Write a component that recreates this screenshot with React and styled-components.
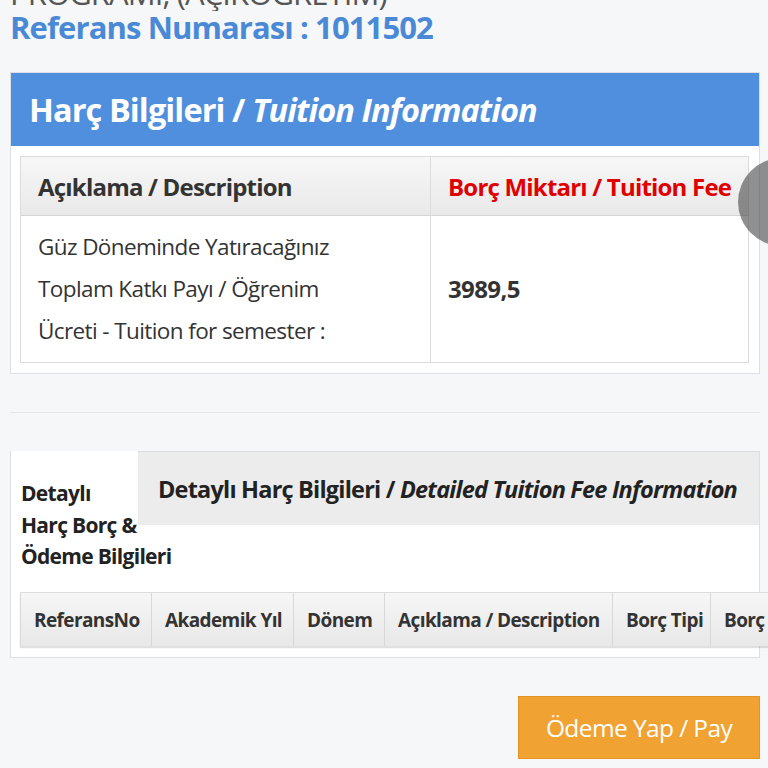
import React from "react";
import styled, { createGlobalStyle } from "styled-components";

const Global = createGlobalStyle`
  html, body { margin: 0; padding: 0; overflow: hidden; }
  body {
    background: #f6f7f9;
    font-family: "Open Sans", "Noto Sans", sans-serif;
    color: #333;
  }
`;

const Page = styled.div`
  position: relative;
  width: 768px;
  height: 768px;
  overflow: hidden;
  padding: 0 8px 0 10px;
  box-sizing: border-box;
`;

const TopClip = styled.div`
  height: 11px;
  overflow: hidden;
`;

const TopLine = styled.div`
  font-size: 31px;
  line-height: 30px;
  color: #555;
  margin-top: -22px;
  white-space: nowrap;
  letter-spacing: -0.9px;
`;

const RefLine = styled.div`
  font-size: 31px;
  line-height: 32px;
  font-weight: 700;
  color: #4a89d6;
  letter-spacing: -0.9px;
`;

const Panel = styled.section`
  margin-top: ${(p) => p.$mt || 0}px;
  background: #fff;
  border: 1px solid #dcdfe3;
`;

const PanelHeader = styled.h2`
  margin: 0;
  background: #4f8fdd;
  color: #fff;
  font-size: 32.5px;
  font-weight: 700;
  height: 73px;
  display: flex;
  align-items: center;
  padding-left: 18px;
  letter-spacing: -0.9px;
  em { font-style: italic; }
`;

const PanelBody = styled.div`
  padding: 10px 10px 10px 9px;
`;

const FeeTable = styled.div`
  display: grid;
  grid-template-columns: 409px 1fr;
  border: 1px solid #dcdcdc;
`;

const HeadCell = styled.div`
  height: 58px;
  display: flex;
  align-items: center;
  padding-left: 17px;
  font-size: 24px;
  font-weight: 700;
  color: ${(p) => (p.$red ? "#e00000" : "#333")};
  background: linear-gradient(#f7f7f7, #e9e9e9);
  border-bottom: 1px solid #d4d4d4;
  border-left: ${(p) => (p.$first ? "none" : "1px solid #dcdcdc")};
  white-space: nowrap;
  letter-spacing: -0.8px;
`;

const BodyCell = styled.div`
  padding: 10px 60px 10px 17px;
  line-height: 42px;
  font-weight: ${(p) => (p.$bold ? 700 : 400)};
  font-size: ${(p) => (p.$bold ? "24px" : "22.5px")};
  color: #333;
  display: flex;
  align-items: center;
  border-left: ${(p) => (p.$first ? "none" : "1px solid #dcdcdc")};
  letter-spacing: -0.6px;
`;

const Rule = styled.hr`
  margin: 38px 0 38px 0;
  border: 0;
  border-top: 1px solid #e3e5e8;
`;

const TabPanel = styled.section`
  background: #fff;
  border: 1px solid #dcdfe3;
  border-top: none;
  padding-bottom: 11px;
`;

const TabBar = styled.div`
  display: flex;
  align-items: flex-start;
  height: 141px;
`;

const ActiveTab = styled.div`
  width: 117px;
  flex: none;
  padding: 27px 0 0 10px;
  font-size: 21px;
  line-height: 31.5px;
  font-weight: 700;
  color: #222;
  white-space: pre-line;
  letter-spacing: -0.7px;
`;

const OtherTab = styled.div`
  flex: 1;
  height: 73px;
  background: #ececec;
  border-top: 1px solid #dcdcdc;
  display: flex;
  align-items: center;
  padding-left: 20px;
  font-size: 23.5px;
  font-weight: 700;
  color: #222;
  white-space: nowrap;
  letter-spacing: -0.8px;
  em { font-style: italic; }
`;

const DetailHead = styled.div`
  display: flex;
  margin-left: 9px;
  width: 760px;
  border-top: 1px solid #dcdcdc;
  box-shadow: 0 2px 1px rgba(0, 0, 0, 0.12);
`;

const DetailTh = styled.div`
  flex: none;
  width: ${(p) => p.$w}px;
  height: 53px;
  box-sizing: border-box;
  display: flex;
  align-items: center;
  padding-left: 13px;
  font-size: 19px;
  font-weight: 700;
  color: #333;
  background: linear-gradient(#f6f6f6, #e8e8e8);
  border-left: 1px solid #d8d8d8;
  white-space: nowrap;
  overflow: hidden;
  letter-spacing: -0.6px;
`;

const Actions = styled.div`
  display: flex;
  justify-content: flex-end;
  margin-top: 38px;
`;

const PayButton = styled.button`
  width: 242px;
  height: 63px;
  background: #f0a232;
  border: 1px solid #e39423;
  color: #fff;
  font-family: inherit;
  font-size: 24.5px;
  letter-spacing: -0.6px;
`;

const Handle = styled.div`
  position: absolute;
  left: 738px;
  top: 158px;
  width: 88px;
  height: 88px;
  border-radius: 50%;
  background: rgba(70, 70, 70, 0.6);
`;

const cols = [
  ["ReferansNo", 131],
  ["Akademik Yıl", 142],
  ["Dönem", 91],
  ["Açıklama / Description", 228],
  ["Borç Tipi", 98],
  ["Borç Miktarı", 120],
];

export default function App() {
  return (
    <Page>
      <Global />
      <TopClip>
        <TopLine>PROGRAMI, (AÇIKÖĞRETİM)</TopLine>
      </TopClip>
      <RefLine>Referans Numarası : 1011502</RefLine>
      <Panel $mt={29}>
        <PanelHeader>
          Harç Bilgileri /&nbsp;<em>Tuition Information</em>
        </PanelHeader>
        <PanelBody>
          <FeeTable>
            <HeadCell $first>Açıklama / Description</HeadCell>
            <HeadCell $red>Borç Miktarı / Tuition Fee</HeadCell>
            <BodyCell $first>
              Güz Döneminde Yatıracağınız Toplam Katkı Payı / Öğrenim Ücreti - Tuition for semester :
            </BodyCell>
            <BodyCell $bold>3989,5</BodyCell>
          </FeeTable>
        </PanelBody>
      </Panel>
      <Rule />
      <TabPanel>
        <TabBar>
          <ActiveTab>{"Detaylı\nHarç Borç &\nÖdeme\u00a0Bilgileri"}</ActiveTab>
          <OtherTab>
            Detaylı Harç Bilgileri /&nbsp;<em>Detailed Tuition Fee Information</em>
          </OtherTab>
        </TabBar>
        <DetailHead>
          {cols.map(([t, w]) => (
            <DetailTh key={t} $w={w}>
              {t}
            </DetailTh>
          ))}
        </DetailHead>
      </TabPanel>
      <Actions>
        <PayButton>Ödeme Yap / Pay</PayButton>
      </Actions>
      <Handle />
    </Page>
  );
}
